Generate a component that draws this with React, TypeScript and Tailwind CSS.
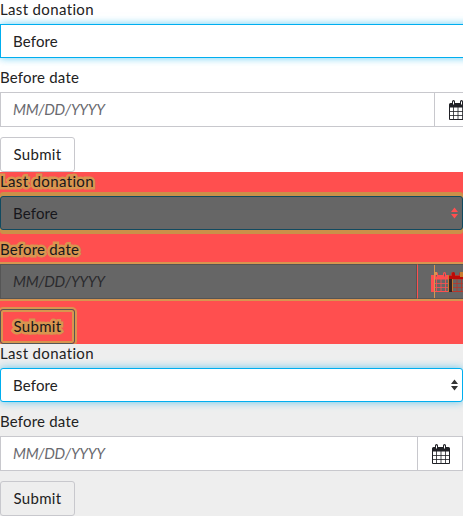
import React from "react";

type Variant = "before" | "diff" | "after";

const halo = "[-webkit-text-stroke:5px_#d8954f] [paint-order:stroke_fill] [stroke-linejoin:round]";

function Calendar({ className = "" }: { className?: string }) {
  return (
    <svg viewBox="0 0 20 20" className={`h-5 w-5 shrink-0 ${className}`} fill="none" stroke="currentColor">
      <path d="M1 4.5Q1 3 2.5 3H4V1.6Q4 0 5.5 0T7 1.6V3h5V1.6Q12 0 13.5 0T15 1.6V3h2.500Q19 3 19 4.500V7.500H1zM5 1.500V4.500H6V1.500zM13 1.500V4.500H14V1.500z" fill="currentColor" fillRule="evenodd" stroke="none" />
      <path d="M1.500 7V19.500H18.500V7" />
      <path d="M1.500 11.500h17M1.500 15.500h17M5.500 7v12M10 7v12M14.500 7v12" strokeWidth="0.8" />
    </svg>
  );
}

function Arrows({ className }: { className: string }) {
  return (
    <svg viewBox="0 0 7 12" className={`h-3 w-[7px] ${className}`} fill="currentColor">
      <path d="M3.5 0.5 7 5H0zM0 7h7L3.5 11.5z" />
    </svg>
  );
}

const panels = {
  before: {
    root: "w-[480px] bg-white",
    select: "border-[#00aeef] bg-white shadow-[0_0_8px_rgba(0,174,239,0.6)]",
    input: "w-[435px] border-[#c8c8cd] bg-white",
    hint: "text-[#6a6a6f]",
    button: "border-[#c8c8cd]",
    label: "",
  },
  diff: {
    root: "w-[463px] bg-[#ff4f4f] text-[#17171c]",
    select: "rounded-[3px] border-[#104a60] bg-[#666] shadow-[0_-4px_0_#cb9049,0_4px_0_#cb9049]",
    input: "w-[417px] border-[#555] bg-[#666] shadow-[0_-2px_0_#d8954f,0_2px_0_#d8954f]",
    hint: "text-[#2b2b2e]",
    button: "border-[#555] shadow-[0_0_0_2px_#d8954f,inset_0_0_0_2px_#d8954f]",
    label: halo,
  },
  after: {
    root: "w-[463px] bg-[#eee]",
    select: "rounded-[3px] border-[#00aeef] bg-white shadow-[0_0_8px_rgba(0,174,239,0.6)]",
    input: "w-[418px] border-[#c8c8cd] bg-white",
    hint: "text-[#6a6a6f]",
    button: "border-[#c8c8cd]",
    label: "",
  },
};

function DonationForm({ variant }: { variant: Variant }) {
  const s = panels[variant];
  return (
    <section className={`flex h-[172px] shrink-0 flex-col ${s.root}`}>
      <label className="h-6 leading-[18px]">
        <span className={`tracking-[0.35px] ${s.label}`}>Last donation</span>
      </label>
      <div className={`flex h-[34px] shrink-0 items-center justify-between border pr-[4px] pl-3 ${s.select}`}>
        <span className="tracking-[0.15px]">Before</span>
        {variant === "after" && <Arrows className="text-[#333]" />}
        {variant === "diff" && <Arrows className="text-[#ff4f4f]" />}
      </div>
      <label className="h-[34px] pt-[10px] leading-[18px]">
        <span className={`tracking-[0.2px] ${s.label}`}>Before date</span>
      </label>
      <div className="flex h-[35px] shrink-0">
        <div className={`flex shrink-0 items-center border pl-3 italic ${s.input} ${s.hint}`}>
          <span className="tracking-[-0.3px]">MM/DD/YYYY</span>
        </div>
        {variant === "diff" ? (
          <div className="relative w-[46px] overflow-hidden border-y border-l border-y-[#555] border-l-[#ff4f4f] bg-[#666] shadow-[0_-2px_0_#d8954f,0_2px_0_#d8954f]">
            <Calendar className="absolute top-[7px] left-[13px] text-[#ff4f4f]" />
            <div className="absolute top-[10px] left-[13px] h-[17px] w-[3px] bg-[#ff4f4f]" />
            <div className="absolute top-0 left-[16px] h-full w-px bg-[#d8954f]" />
            <div className="absolute top-[7px] left-[16px] h-[3px] w-[3px] bg-[#d8954f]" />
            <Calendar className="absolute top-[7px] left-[29px] text-[#b9362c]" />
            <div className="absolute top-[11px] left-[30px] h-[3px] w-[16px] bg-[#bd0906]" />
            <div className="absolute top-[14px] left-[31px] h-[13px] w-[3px] bg-[#342323]" />
            <div className="absolute top-[10px] left-[30px] h-[17px] w-px bg-[#c87b2d]" />
            <div className="absolute top-[14px] left-[34px] h-[12px] w-px bg-[#c87b2d]" />
            <div className="absolute top-[7px] left-[34px] h-[5px] w-[3px] rounded-t-sm bg-[#bd0906]" />
            <div className="absolute top-[7px] left-[42px] h-[5px] w-[3px] bg-[#c87b2d]" />
          </div>
        ) : (
          <div className="flex w-[45px] items-center border-y border-r border-[#c8c8cd] bg-white pl-[13px] text-[#202126]">
            <Calendar />
          </div>
        )}
      </div>
      <button className={`mt-[10px] h-[35px] w-[75px] shrink-0 rounded-[3px] border ${s.button}`}>
        <span className={s.label}>Submit</span>
      </button>
    </section>
  );
}

export default function App() {
  return (
    <main className="flex h-[516px] w-[463px] flex-col overflow-hidden font-[Lato,sans-serif] text-[15px] tracking-[0.3px] text-[#222]">
      <DonationForm variant="before" />
      <DonationForm variant="diff" />
      <DonationForm variant="after" />
    </main>
  );
}
